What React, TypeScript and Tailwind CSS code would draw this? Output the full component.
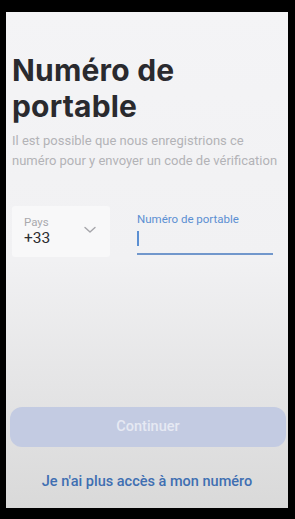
import React from 'react';

const App: React.FC = () => {
    return (
        <div className="w-[295px] h-[519px] bg-black pt-[12px] pl-[6px] overflow-hidden">
            <div
                className="w-[282px] h-[496px] flex flex-col bg-gradient-to-b from-[#f4f4f6] via-[#f1f1f3] to-[#d9d9d9] px-[6px]"
                style={{ fontFamily: 'Roboto, "Liberation Sans", sans-serif' }}
            >
                {/* Title */}
                <h1
                    className="mt-[40px] text-[30px] leading-[36px] font-bold text-[#2a2a2e] tracking-[0.2px]"
                    style={{ fontFamily: 'Inter, "Liberation Sans", sans-serif' }}
                >
                    Numéro de<br />portable
                </h1>
                <p className="mt-[7px] whitespace-nowrap text-[13px] leading-[20px] text-[#b3b3b7]">
                    Il est possible que nous enregistrions ce<br />numéro pour y envoyer un code de vérification
                </p>

                {/* Inputs */}
                <div className="mt-[35px] flex items-start">
                    <div className="w-[98px] h-[51px] bg-[#f8f8f9] rounded-[3px] flex items-center pl-[12px] pr-[14px]">
                        <div className="flex-1">
                            <div className="text-[11.5px] leading-[13px] text-[#a9a9ad]">Pays</div>
                            <div className="text-[15.5px] leading-[19px] text-[#2c2c30]">+33</div>
                        </div>
                        <svg width="12" height="8" viewBox="0 0 12 8" className="mb-[4px]">
                            <path d="M1 1.5 L6 6 L11 1.5" fill="none" stroke="#a5a5aa" strokeWidth="1.4" strokeLinecap="round" strokeLinejoin="round" />
                        </svg>
                    </div>
                    <div className="ml-[27px] w-[136px] pt-[6px]">
                        <div className="text-[11.5px] leading-[14px] text-[#5b8fd2]">Numéro de portable</div>
                        <div className="h-[24px] flex items-center">
                            <div className="w-[2px] h-[15px] bg-[#5b8fd2]" />
                        </div>
                        <div className="h-[2px] bg-[#7197cc] mt-[3px]" />
                    </div>
                </div>

                <div className="flex-1" />

                {/* Continue */}
                <button className="h-[40px] w-[276px] -ml-[2px] rounded-[12px] bg-[#c3cbe2] text-[#e6e9f3] text-[14.5px] font-medium">
                    Continuer
                </button>

                <div className="mt-[26px] mb-[17px] text-center text-[14.5px] leading-[18px] font-medium text-[#3f6fb2]">
                    Je n'ai plus accès à mon numéro
                </div>
            </div>
        </div>
    );
};

export default App;
